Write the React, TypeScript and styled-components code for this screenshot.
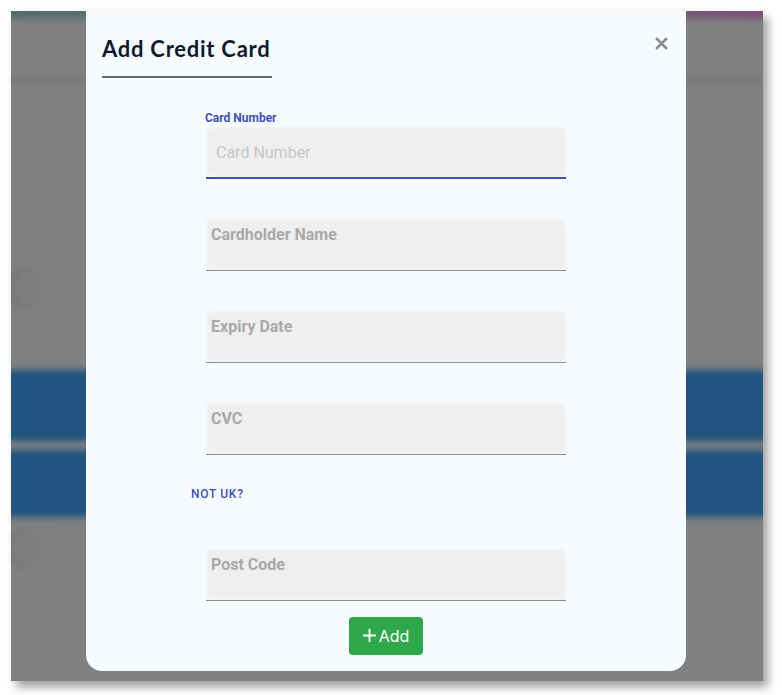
import React from "react"
import styled, { createGlobalStyle } from "styled-components";

const GlobalStyle = createGlobalStyle`
    html, body {
        margin: 0;
        padding: 0;
        background: #ffffff;
        font-family: Roboto, "Liberation Sans", Arial, sans-serif;
    }
    * { box-sizing: border-box; }
`

const Page = styled.div`
    padding: 11px 19px 14px 11px;
    width: 782px;
`

const Backdrop = styled.div`
    position: relative;
    width: 752px;
    height: 670px;
    overflow: hidden;
    background: #7f8081;
    box-shadow: 5px 6px 9px rgba(0, 0, 0, 0.38);
`

const BlurredPage = styled.div`
    display: flex;
    flex-direction: column;
    height: 100%;
    filter: blur(3px);
    margin: 0 -6px;
`

const TopStrip = styled.div`
    height: 10px;
    margin-top: -3px;
    background: linear-gradient(90deg, #4a6a69 0%, #52706e 20%, #6a6a72 60%, #7b4876 100%);
`

const HeaderArea = styled.div`
    height: 64px;
    background: #7f8081;
    border-bottom: 4px solid #747575;
`

const GhostRow = styled.div<{ $gap: number }>`
    display: flex;
    align-items: center;
    margin-top: ${p => p.$gap}px;
    height: 46px;
`

const GhostButton = styled.div`
    width: 40px;
    height: 44px;
    border-radius: 50%;
    background: #7d7e7f;
    box-shadow: 0 0 0 2px #868788, inset 4px 0 6px #6f7071;
`

const BlueBand = styled.div<{ $gap: number; $h: number }>`
    margin-top: ${p => p.$gap}px;
    height: ${p => p.$h}px;
    background: #1f5580;
`

const Modal = styled.div`
    position: absolute;
    left: 75px;
    top: 0;
    width: 600px;
    height: 660px;
    background: #f7fbfe;
    border-radius: 0 0 16px 16px;
    display: flex;
    flex-direction: column;
`

const ModalHeader = styled.div`
    display: flex;
    justify-content: space-between;
    align-items: flex-start;
    padding: 24px 16px 0 16px;
`

const Title = styled.h2`
    margin: 0;
    padding: 0 0 13px 0;
    width: 170px;
    border-bottom: 2px solid #6b6b6b;
    font-family: Lato, "Liberation Sans", sans-serif;
    font-weight: 700;
    font-size: 22px;
    line-height: 28px;
    color: #0d1a2e;
    letter-spacing: 0.75px;
    white-space: nowrap;
`

const CloseButton = styled.button`
    background: transparent;
    border: none;
    padding: 0;
    margin: 2px 2px 0 0;
    cursor: pointer;
    color: #8a8a8a;
    display: flex;
`

const Form = styled.div`
    width: 360px;
    margin: 33px auto 0 auto;
    display: flex;
    flex-direction: column;
`

const FieldLabel = styled.label`
    font-size: 12px;
    font-weight: 700;
    color: #3f51b5;
    margin: 0 0 2px -1px;
    line-height: 14px;
`

const InputBox = styled.div<{ $focused?: boolean; $gap?: number }>`
    height: 52px;
    margin-top: ${p => p.$gap ?? 0}px;
    background: #efefef;
    border-radius: 4px 4px 0 0;
    border-bottom: ${p => p.$focused ? "2px solid #3f51b5" : "1px solid #8d8d8d"};
    box-shadow: inset 0 0 5px 1px rgba(247, 251, 254, 0.7);
    display: flex;
    align-items: ${p => p.$focused ? "center" : "flex-start"};
    padding: ${p => p.$focused ? "0 10px 0 10px" : "6px 5px 0 5px"};
`

const Placeholder = styled.span`
    font-size: 16px;
    color: #c6c6c6;
`

const InnerLabel = styled.span`
    font-size: 16px;
    font-weight: 700;
    color: #a9a9a9;
    line-height: 19px;
`

const NotUkLink = styled.a`
    margin: 33px 0 0 -15px;
    font-size: 12px;
    font-weight: 500;
    color: #3f51b5;
    line-height: 12px;
    letter-spacing: 0.7px;
    cursor: pointer;
`

const AddButton = styled.button`
    align-self: center;
    margin-top: 16px;
    width: 74px;
    height: 38px;
    border: none;
    border-radius: 4px;
    background: #2ea84a;
    color: #ffffff;
    font-family: Inter, Lato, sans-serif;
    font-size: 16px;
    font-weight: 400;
    display: flex;
    align-items: center;
    justify-content: center;
    gap: 3px;
    padding: 0 0 1px 0;
    cursor: pointer;
`

const PlusIcon = () => (
    <svg width="13" height="13" viewBox="0 0 13 13">
        <path d="M6.5 1v11M1 6.5h11" stroke="#ffffff" strokeWidth="1.8" strokeLinecap="square" />
    </svg>
)

const CloseIcon = () => (
    <svg width="13" height="13" viewBox="0 0 13 13">
        <path d="M2 2l9 9M11 2l-9 9" stroke="currentColor" strokeWidth="2.6" strokeLinecap="square" />
    </svg>
)

const fields = ["Cardholder Name", "Expiry Date", "CVC"]

export default function App() {
    return (
        <>
            <GlobalStyle />
            <Page>
                <Backdrop>
                    <BlurredPage>
                        <TopStrip />
                        <HeaderArea />
                        <GhostRow $gap={183}><GhostButton /></GhostRow>
                        <BlueBand $gap={59} $h={71} />
                        <BlueBand $gap={9} $h={67} />
                        <GhostRow $gap={8}><GhostButton /></GhostRow>
                    </BlurredPage>
                    <Modal>
                        <ModalHeader>
                            <Title>Add Credit Card</Title>
                            <CloseButton aria-label="close"><CloseIcon /></CloseButton>
                        </ModalHeader>
                        <Form>
                            <FieldLabel>Card Number</FieldLabel>
                            <InputBox $focused>
                                <Placeholder>Card Number</Placeholder>
                            </InputBox>
                            {fields.map(f => (
                                <InputBox key={f} $gap={40}>
                                    <InnerLabel>{f}</InnerLabel>
                                </InputBox>
                            ))}
                            <NotUkLink>NOT UK?</NotUkLink>
                            <InputBox $gap={49}>
                                <InnerLabel>Post Code</InnerLabel>
                            </InputBox>
                            <AddButton><PlusIcon />Add</AddButton>
                        </Form>
                    </Modal>
                </Backdrop>
            </Page>
        </>
    )
}
